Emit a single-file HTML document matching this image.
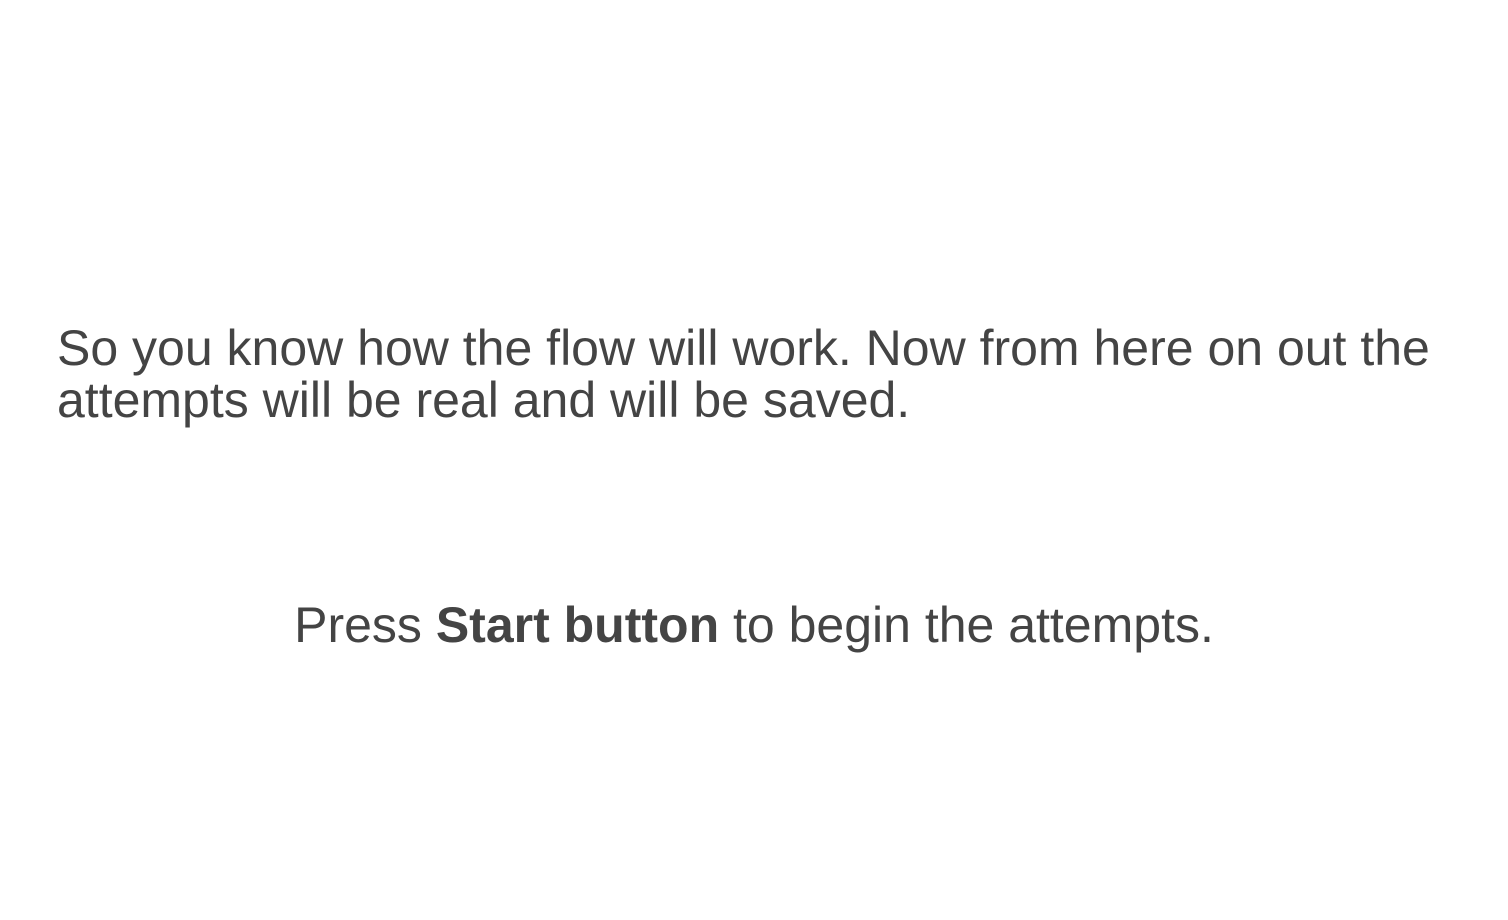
<!DOCTYPE html>
<html><head><meta charset="utf-8"><style>
html,body{margin:0;padding:0;background:#fff;width:1508px;height:920px;overflow:hidden}
body{font-family:"Liberation Sans",Arial,sans-serif;color:#444;font-size:50px;line-height:52px}
.p1{position:absolute;left:57px;top:322px;width:1440px}
.p2{position:absolute;left:0;width:1508px;top:599px;text-align:center}
</style></head><body>
<div class="p1">So you know how the flow will work. Now from here on out the<br>attempts will be real and will be saved.</div>
<div class="p2">Press <b>Start button</b> to begin the attempts.</div>
</body></html>
